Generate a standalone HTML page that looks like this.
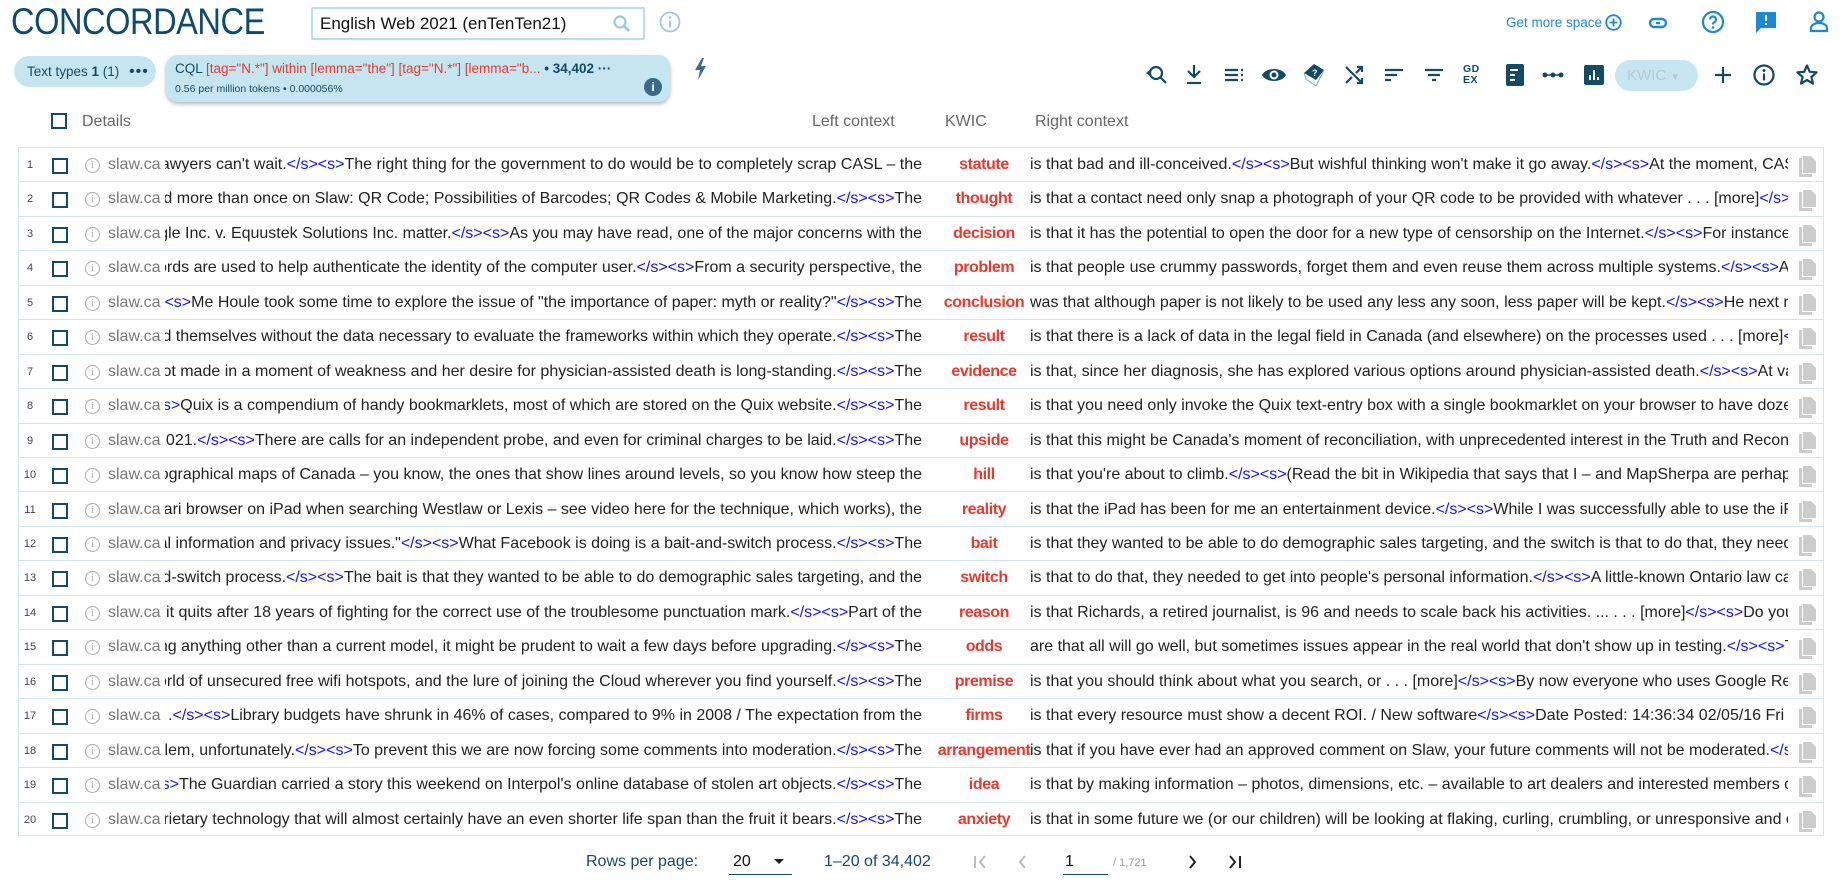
<!DOCTYPE html>
<html><head><meta charset="utf-8"><style>
*{box-sizing:border-box;margin:0;padding:0}
body{width:1843px;height:896px;background:#fff;font-family:"Liberation Sans",Arial,sans-serif;position:relative;overflow:hidden;color:#222}
.a{position:absolute}
.title{left:11px;top:2px;font-size:37px;color:#0e4a6e;letter-spacing:-0.5px;line-height:40px;transform:scaleX(0.88);transform-origin:left top;white-space:nowrap}
.search{left:311px;top:7px;width:334px;height:33px;border:2px solid #b7dcea;border-radius:2px;font-size:17px;line-height:29px;padding-left:7px;color:#111}
.ic{fill:none;stroke:#134a66;stroke-width:2.2}
.chip1{left:14px;top:56px;width:142px;height:31px;border-radius:16px;background:#c5e6f0;font-size:13.5px;line-height:31px;padding-left:13px;color:#134a66}
.chip2{left:166px;top:55px;width:504px;height:47px;border-radius:12px;background:#c5e6f0;box-shadow:0 2px 4px rgba(0,0,0,.3);color:#134a66}
.hdr{top:113px;font-size:16px;color:#666;line-height:18px}
.tbl{left:18px;top:147px;width:1806px;height:689px;border:1px solid #cfe6ee}
.row{position:absolute;left:0;width:1804px;height:34.45px;border-bottom:1px solid #cfe6ee;font-size:16px;line-height:34px;white-space:nowrap}
.row:last-child{border-bottom:none}
.n{position:absolute;left:0;width:22px;text-align:center;font-size:11px;color:#444}
.cb{position:absolute;left:33px;top:10px;width:16px;height:16px;border:2px solid #134a66}
.inf{position:absolute;left:66px;top:10px;width:15px;height:15px;border:1.3px solid #aaa;border-radius:50%;font-size:10px;line-height:13px;text-align:center;color:#aaa;font-family:"Liberation Serif",serif}
.dom{position:absolute;left:89px;color:#777}
.lc{position:absolute;left:146px;width:757px;overflow:hidden;display:flex;justify-content:flex-end}
.lc span,.rc span{flex:none}
.kw{position:absolute;left:915px;width:100px;text-align:center;color:#e8392f;font-weight:bold;font-size:16px;letter-spacing:-0.4px}
.rc{position:absolute;left:1011px;width:758px;overflow:hidden}
.t{color:#1515ee}
.cp{position:absolute;left:1780px;top:8px;width:17px;height:21px}
.ft{top:852px;font-size:16px;color:#134a66;line-height:20px}
</style></head><body>
<div class="a title">CONCORDANCE</div>
<div class="a search">English Web 2021 (enTenTen21)
<svg class="a" style="left:299px;top:5px" width="20" height="20" viewBox="0 0 20 20"><circle cx="8" cy="8" r="5.5" fill="none" stroke="#9cc9dc" stroke-width="2.2"/><path d="M12 12l5 5" stroke="#9cc9dc" stroke-width="2.8"/></svg></div>
<svg class="a" style="left:659px;top:11px" width="22" height="22" viewBox="0 0 22 22"><circle cx="11" cy="11" r="9.5" fill="none" stroke="#9cc9dc" stroke-width="1.8"/><circle cx="11" cy="6.5" r="1.3" fill="#9cc9dc"/><path d="M11 9.5v7" stroke="#9cc9dc" stroke-width="2"/></svg>

<div class="a" style="left:1506px;top:14px;font-size:13.5px;color:#1e88d2;line-height:18px">Get more space</div>
<svg class="a" style="left:1605px;top:14px" width="17" height="17" viewBox="0 0 17 17"><circle cx="8.5" cy="8.5" r="7.3" fill="none" stroke="#1e88d2" stroke-width="1.8"/><path d="M8.5 4.5v8M4.5 8.5h8" stroke="#1e88d2" stroke-width="1.8"/></svg>
<svg class="a" style="left:1647px;top:14px" width="22" height="18" viewBox="0 0 22 18"><rect x="3" y="5" width="16" height="8" rx="4" fill="none" stroke="#1e88d2" stroke-width="2.4"/><path d="M9 9h4" stroke="#1e88d2" stroke-width="2.4"/></svg>
<svg class="a" style="left:1701px;top:10px" width="24" height="24" viewBox="0 0 24 24"><circle cx="12" cy="12" r="10" fill="none" stroke="#1e88d2" stroke-width="2.2"/><path d="M9 9.5a3 3 0 1 1 4 2.8c-1 .5-1 1.2-1 2.2" fill="none" stroke="#1e88d2" stroke-width="2.2"/><circle cx="12" cy="17.5" r="1.3" fill="#1e88d2"/></svg>
<svg class="a" style="left:1755px;top:11px" width="22" height="24" viewBox="0 0 22 24"><path d="M1 1h20v16H6l-5 5z" fill="#1e88d2"/><path d="M11 4v6M11 12v2" stroke="#fff" stroke-width="2"/></svg>
<svg class="a" style="left:1809px;top:10px" width="20" height="24" viewBox="0 0 20 24"><circle cx="10" cy="7" r="4.5" fill="none" stroke="#1e88d2" stroke-width="2.2"/><path d="M2 21v-3c0-3 4-5 8-5s8 2 8 5v3z" fill="none" stroke="#1e88d2" stroke-width="2.2"/></svg>

<div class="a chip1">Text types <b>1</b> (1) <span style="font-size:16px;letter-spacing:1px;margin-left:6px">•••</span></div>
<div class="a chip2">
<div class="a" style="left:9px;top:6px;font-size:13.5px;white-space:nowrap">CQL <span style="color:#e8392f">[tag="N.*"] within [lemma="the"] [tag="N.*"] [lemma="b...</span> <b>• 34,402 ···</b></div>
<div class="a" style="left:9px;top:28px;font-size:10.5px">0.56 per million tokens • 0.000056%</div>
<div class="a" style="left:478px;top:23px;width:18px;height:18px;border-radius:50%;background:#3a6b86;color:#fff;font-size:12px;text-align:center;line-height:18px;font-weight:bold">i</div>
</div>
<svg class="a" style="left:694px;top:58px" width="14" height="22" viewBox="0 0 14 22"><path d="M8 0L1 12h5l-2 10 8-14H7l3-8z" fill="#3e6e88"/></svg>

<!-- toolbar -->
<svg class="a" style="left:1144px;top:63px" width="24" height="24" viewBox="0 0 24 24"><circle cx="12" cy="10" r="6" class="ic" stroke-width="2.6"/><path d="M16 14l6 6" class="ic" stroke-width="3"/><path d="M2 10l4-3v6z" fill="#134a66"/></svg>
<svg class="a" style="left:1183px;top:63px" width="22" height="24" viewBox="0 0 22 24"><path d="M11 2v11M5 8l6 6 6-6" class="ic" stroke-width="3"/><path d="M4 20h14" class="ic" stroke-width="2.5"/></svg>
<svg class="a" style="left:1223px;top:64px" width="22" height="22" viewBox="0 0 22 22"><path d="M2 6h13M2 11h13M2 16h13M18 6h2M18 11h2M18 16h2" class="ic" stroke-width="2.2"/></svg>
<svg class="a" style="left:1261px;top:64px" width="26" height="22" viewBox="0 0 26 22"><path d="M1 11C5 3 21 3 25 11C21 19 5 19 1 11z" fill="#134a66"/><circle cx="13" cy="11" r="4.5" fill="#fff"/><circle cx="13" cy="11" r="2.5" fill="#134a66"/></svg>
<svg class="a" style="left:1301px;top:62px" width="26" height="26" viewBox="0 0 26 26"><path d="M3 11l10-9 10 6-8 10z" fill="#134a66"/><path d="M3 11l2 6 10 7 8-16" fill="none" stroke="#8ab" stroke-width="1"/><text x="11" y="14" font-size="9" fill="#fff" font-family="Liberation Sans" font-weight="bold">?</text></svg>
<svg class="a" style="left:1343px;top:64px" width="22" height="22" viewBox="0 0 22 22"><path d="M3 3l16 16M3 19L9 13M13 9l6-6M14 19h5v-5M14 3h5v5" class="ic" stroke-width="2.6"/></svg>
<svg class="a" style="left:1383px;top:64px" width="22" height="22" viewBox="0 0 22 22"><path d="M2 6h18M2 11h12M2 16h6" class="ic" stroke-width="2.4"/></svg>
<svg class="a" style="left:1423px;top:64px" width="22" height="22" viewBox="0 0 22 22"><path d="M2 6h18M5 11h12M9 16h4" class="ic" stroke-width="2.4"/></svg>
<div class="a" style="left:1463px;top:64px;font-size:10.5px;font-weight:bold;color:#134a66;line-height:11px;letter-spacing:0.5px">GD<br>EX</div>
<svg class="a" style="left:1505px;top:63px" width="20" height="24" viewBox="0 0 20 24"><rect x="1" y="1" width="18" height="22" rx="2" fill="#134a66"/><path d="M5 7h8M5 12h5M5 17h5" stroke="#fff" stroke-width="2"/></svg>
<svg class="a" style="left:1542px;top:66px" width="22" height="18" viewBox="0 0 22 18"><circle cx="3" cy="9" r="2.5" fill="#134a66"/><circle cx="11" cy="9" r="2.5" fill="#134a66"/><circle cx="19" cy="9" r="2.5" fill="#134a66"/><path d="M3 9h16" stroke="#134a66" stroke-width="1.5"/></svg>
<svg class="a" style="left:1584px;top:64px" width="20" height="22" viewBox="0 0 20 22"><rect x="0" y="1" width="20" height="20" rx="2" fill="#134a66"/><path d="M6 16V11M10 16V6M14 16V13" stroke="#fff" stroke-width="2"/></svg>
<div class="a" style="left:1615px;top:60px;width:83px;height:31px;border-radius:16px;background:#c5e6f0;color:#b9c8cd;font-size:15px;line-height:31px;padding-left:12px">KWIC <span style="font-size:10px">▼</span></div>
<svg class="a" style="left:1712px;top:64px" width="22" height="22" viewBox="0 0 22 22"><path d="M11 3v16M3 11h16" class="ic" stroke-width="2.6"/></svg>
<svg class="a" style="left:1752px;top:63px" width="24" height="24" viewBox="0 0 24 24"><circle cx="12" cy="12" r="9.5" class="ic" stroke-width="2.4"/><circle cx="12" cy="7.5" r="1.5" fill="#134a66"/><path d="M12 10.5v7" class="ic" stroke-width="2.6"/></svg>
<svg class="a" style="left:1795px;top:63px" width="24" height="24" viewBox="0 0 24 24"><path d="M12 2.5l2.8 6.3 6.8.6-5.2 4.5 1.6 6.7L12 17l-6 3.6 1.6-6.7-5.2-4.5 6.8-.6z" class="ic" stroke-width="2.2" stroke-linejoin="round"/></svg>

<!-- header -->
<div class="a" style="left:51px;top:113px;width:16px;height:16px;border:2px solid #134a66"></div>
<div class="a hdr" style="left:82px">Details</div>
<div class="a hdr" style="left:812px">Left context</div>
<div class="a hdr" style="left:945px">KWIC</div>
<div class="a hdr" style="left:1035px">Right context</div>

<div class="a tbl" id="tb">
<div class="row" style="top:0"><span class="n">1</span><span class="cb"></span><span class="inf">i</span><span class="dom">slaw.ca</span><div class="lc"><span>to the policy concerns raised by many lawyers can't wait.<i class="t" style="font-style:normal">&lt;/s&gt;&lt;s&gt;</i>The right thing for the government to do would be to completely scrap CASL – the</span></div><span class="kw">statute</span><div class="rc"><span>is that bad and ill-conceived.<span class="t">&lt;/s&gt;&lt;s&gt;</span>But wishful thinking won't make it go away.<span class="t">&lt;/s&gt;&lt;s&gt;</span>At the moment, CASL is the law</span></div><svg class="cp" viewBox="0 0 17 21"><path d="M0 2h3v16h10v3H0z" fill="#ccc"/><path d="M4 0h8l5 5v12H4z" fill="#ccc"/></svg></div>
<div class="row" style="top:34.45px"><span class="n">2</span><span class="cb"></span><span class="inf">i</span><span class="dom">slaw.ca</span><div class="lc"><span>This has been discussed more than once on Slaw: QR Code; Possibilities of Barcodes; QR Codes &amp; Mobile Marketing.<span class="t">&lt;/s&gt;&lt;s&gt;</span>The</span></div><span class="kw">thought</span><div class="rc"><span>is that a contact need only snap a photograph of your QR code to be provided with whatever . . . [more]<span class="t">&lt;/s&gt;&lt;s&gt;</span>The</span></div><svg class="cp" viewBox="0 0 17 21"><path d="M0 2h3v16h10v3H0z" fill="#ccc"/><path d="M4 0h8l5 5v12H4z" fill="#ccc"/></svg></div>
<div class="row" style="top:68.9px"><span class="n">3</span><span class="cb"></span><span class="inf">i</span><span class="dom">slaw.ca</span><div class="lc"><span>in the Google Inc. v. Equustek Solutions Inc. matter.<span class="t">&lt;/s&gt;&lt;s&gt;</span>As you may have read, one of the major concerns with the</span></div><span class="kw">decision</span><div class="rc"><span>is that it has the potential to open the door for a new type of censorship on the Internet.<span class="t">&lt;/s&gt;&lt;s&gt;</span>For instance, a</span></div><svg class="cp" viewBox="0 0 17 21"><path d="M0 2h3v16h10v3H0z" fill="#ccc"/><path d="M4 0h8l5 5v12H4z" fill="#ccc"/></svg></div>
<div class="row" style="top:103.35px"><span class="n">4</span><span class="cb"></span><span class="inf">i</span><span class="dom">slaw.ca</span><div class="lc"><span>Passwords are used to help authenticate the identity of the computer user.<span class="t">&lt;/s&gt;&lt;s&gt;</span>From a security perspective, the</span></div><span class="kw">problem</span><div class="rc"><span>is that people use crummy passwords, forget them and even reuse them across multiple systems.<span class="t">&lt;/s&gt;&lt;s&gt;</span>And</span></div><svg class="cp" viewBox="0 0 17 21"><path d="M0 2h3v16h10v3H0z" fill="#ccc"/><path d="M4 0h8l5 5v12H4z" fill="#ccc"/></svg></div>
<div class="row" style="top:137.8px"><span class="n">5</span><span class="cb"></span><span class="inf">i</span><span class="dom">slaw.ca</span><div class="lc"><span><span class="t">&lt;/s&gt;&lt;s&gt;</span>Me Houle took some time to explore the issue of "the importance of paper: myth or reality?"<span class="t">&lt;/s&gt;&lt;s&gt;</span>The</span></div><span class="kw">conclusion</span><div class="rc"><span>was that although paper is not likely to be used any less any soon, less paper will be kept.<span class="t">&lt;/s&gt;&lt;s&gt;</span>He next mentioned</span></div><svg class="cp" viewBox="0 0 17 21"><path d="M0 2h3v16h10v3H0z" fill="#ccc"/><path d="M4 0h8l5 5v12H4z" fill="#ccc"/></svg></div>
<div class="row" style="top:172.25px"><span class="n">6</span><span class="cb"></span><span class="inf">i</span><span class="dom">slaw.ca</span><div class="lc"><span>find themselves without the data necessary to evaluate the frameworks within which they operate.<span class="t">&lt;/s&gt;&lt;s&gt;</span>The</span></div><span class="kw">result</span><div class="rc"><span>is that there is a lack of data in the legal field in Canada (and elsewhere) on the processes used . . . [more]<span class="t">&lt;/s&gt;</span></span></div><svg class="cp" viewBox="0 0 17 21"><path d="M0 2h3v16h10v3H0z" fill="#ccc"/><path d="M4 0h8l5 5v12H4z" fill="#ccc"/></svg></div>
<div class="row" style="top:206.7px"><span class="n">7</span><span class="cb"></span><span class="inf">i</span><span class="dom">slaw.ca</span><div class="lc"><span>was not made in a moment of weakness and her desire for physician-assisted death is long-standing.<span class="t">&lt;/s&gt;&lt;s&gt;</span>The</span></div><span class="kw">evidence</span><div class="rc"><span>is that, since her diagnosis, she has explored various options around physician-assisted death.<span class="t">&lt;/s&gt;&lt;s&gt;</span>At various</span></div><svg class="cp" viewBox="0 0 17 21"><path d="M0 2h3v16h10v3H0z" fill="#ccc"/><path d="M4 0h8l5 5v12H4z" fill="#ccc"/></svg></div>
<div class="row" style="top:241.15px"><span class="n">8</span><span class="cb"></span><span class="inf">i</span><span class="dom">slaw.ca</span><div class="lc"><span><span class="t">&lt;/s&gt;&lt;s&gt;</span>Quix is a compendium of handy bookmarklets, most of which are stored on the Quix website.<span class="t">&lt;/s&gt;&lt;s&gt;</span>The</span></div><span class="kw">result</span><div class="rc"><span>is that you need only invoke the Quix text-entry box with a single bookmarklet on your browser to have dozens</span></div><svg class="cp" viewBox="0 0 17 21"><path d="M0 2h3v16h10v3H0z" fill="#ccc"/><path d="M4 0h8l5 5v12H4z" fill="#ccc"/></svg></div>
<div class="row" style="top:275.6px"><span class="n">9</span><span class="cb"></span><span class="inf">i</span><span class="dom">slaw.ca</span><div class="lc"><span>June 2021.<span class="t">&lt;/s&gt;&lt;s&gt;</span>There are calls for an independent probe, and even for criminal charges to be laid.<span class="t">&lt;/s&gt;&lt;s&gt;</span>The</span></div><span class="kw">upside</span><div class="rc"><span>is that this might be Canada's moment of reconciliation, with unprecedented interest in the Truth and Reconciliation</span></div><svg class="cp" viewBox="0 0 17 21"><path d="M0 2h3v16h10v3H0z" fill="#ccc"/><path d="M4 0h8l5 5v12H4z" fill="#ccc"/></svg></div>
<div class="row" style="top:310.05px"><span class="n">10</span><span class="cb"></span><span class="inf">i</span><span class="dom">slaw.ca</span><div class="lc"><span>topographical maps of Canada – you know, the ones that show lines around levels, so you know how steep the</span></div><span class="kw">hill</span><div class="rc"><span>is that you're about to climb.<span class="t">&lt;/s&gt;&lt;s&gt;</span>(Read the bit in Wikipedia that says that I – and MapSherpa are perhaps</span></div><svg class="cp" viewBox="0 0 17 21"><path d="M0 2h3v16h10v3H0z" fill="#ccc"/><path d="M4 0h8l5 5v12H4z" fill="#ccc"/></svg></div>
<div class="row" style="top:344.5px"><span class="n">11</span><span class="cb"></span><span class="inf">i</span><span class="dom">slaw.ca</span><div class="lc"><span>using the Safari browser on iPad when searching Westlaw or Lexis – see video here for the technique, which works), the</span></div><span class="kw">reality</span><div class="rc"><span>is that the iPad has been for me an entertainment device.<span class="t">&lt;/s&gt;&lt;s&gt;</span>While I was successfully able to use the iPad</span></div><svg class="cp" viewBox="0 0 17 21"><path d="M0 2h3v16h10v3H0z" fill="#ccc"/><path d="M4 0h8l5 5v12H4z" fill="#ccc"/></svg></div>
<div class="row" style="top:378.95px"><span class="n">12</span><span class="cb"></span><span class="inf">i</span><span class="dom">slaw.ca</span><div class="lc"><span>personal information and privacy issues."<span class="t">&lt;/s&gt;&lt;s&gt;</span>What Facebook is doing is a bait-and-switch process.<span class="t">&lt;/s&gt;&lt;s&gt;</span>The</span></div><span class="kw">bait</span><div class="rc"><span>is that they wanted to be able to do demographic sales targeting, and the switch is that to do that, they needed</span></div><svg class="cp" viewBox="0 0 17 21"><path d="M0 2h3v16h10v3H0z" fill="#ccc"/><path d="M4 0h8l5 5v12H4z" fill="#ccc"/></svg></div>
<div class="row" style="top:413.4px"><span class="n">13</span><span class="cb"></span><span class="inf">i</span><span class="dom">slaw.ca</span><div class="lc"><span>is a bait-and-switch process.<span class="t">&lt;/s&gt;&lt;s&gt;</span>The bait is that they wanted to be able to do demographic sales targeting, and the</span></div><span class="kw">switch</span><div class="rc"><span>is that to do that, they needed to get into people's personal information.<span class="t">&lt;/s&gt;&lt;s&gt;</span>A little-known Ontario law case</span></div><svg class="cp" viewBox="0 0 17 21"><path d="M0 2h3v16h10v3H0z" fill="#ccc"/><path d="M4 0h8l5 5v12H4z" fill="#ccc"/></svg></div>
<div class="row" style="top:447.85px"><span class="n">14</span><span class="cb"></span><span class="inf">i</span><span class="dom">slaw.ca</span><div class="lc"><span>he is calling it quits after 18 years of fighting for the correct use of the troublesome punctuation mark.<span class="t">&lt;/s&gt;&lt;s&gt;</span>Part of the</span></div><span class="kw">reason</span><div class="rc"><span>is that Richards, a retired journalist, is 96 and needs to scale back his activities. ... . . . [more]<span class="t">&lt;/s&gt;&lt;s&gt;</span>Do you</span></div><svg class="cp" viewBox="0 0 17 21"><path d="M0 2h3v16h10v3H0z" fill="#ccc"/><path d="M4 0h8l5 5v12H4z" fill="#ccc"/></svg></div>
<div class="row" style="top:482.3px"><span class="n">15</span><span class="cb"></span><span class="inf">i</span><span class="dom">slaw.ca</span><div class="lc"><span>if you're using anything other than a current model, it might be prudent to wait a few days before upgrading.<span class="t">&lt;/s&gt;&lt;s&gt;</span>The</span></div><span class="kw">odds</span><div class="rc"><span>are that all will go well, but sometimes issues appear in the real world that don't show up in testing.<span class="t">&lt;/s&gt;&lt;s&gt;</span>The</span></div><svg class="cp" viewBox="0 0 17 21"><path d="M0 2h3v16h10v3H0z" fill="#ccc"/><path d="M4 0h8l5 5v12H4z" fill="#ccc"/></svg></div>
<div class="row" style="top:516.75px"><span class="n">16</span><span class="cb"></span><span class="inf">i</span><span class="dom">slaw.ca</span><div class="lc"><span>the world of unsecured free wifi hotspots, and the lure of joining the Cloud wherever you find yourself.<span class="t">&lt;/s&gt;&lt;s&gt;</span>The</span></div><span class="kw">premise</span><div class="rc"><span>is that you should think about what you search, or . . . [more]<span class="t">&lt;/s&gt;&lt;s&gt;</span>By now everyone who uses Google Reader</span></div><svg class="cp" viewBox="0 0 17 21"><path d="M0 2h3v16h10v3H0z" fill="#ccc"/><path d="M4 0h8l5 5v12H4z" fill="#ccc"/></svg></div>
<div class="row" style="top:551.2px"><span class="n">17</span><span class="cb"></span><span class="inf">i</span><span class="dom">slaw.ca</span><div class="lc"><span>budgets .<span class="t">&lt;/s&gt;&lt;s&gt;</span>Library budgets have shrunk in 46% of cases, compared to 9% in 2008 / The expectation from the</span></div><span class="kw">firms</span><div class="rc"><span>is that every resource must show a decent ROI. / New software<span class="t">&lt;/s&gt;&lt;s&gt;</span>Date Posted: 14:36:34 02/05/16 Fri</span></div><svg class="cp" viewBox="0 0 17 21"><path d="M0 2h3v16h10v3H0z" fill="#ccc"/><path d="M4 0h8l5 5v12H4z" fill="#ccc"/></svg></div>
<div class="row" style="top:585.65px"><span class="n">18</span><span class="cb"></span><span class="inf">i</span><span class="dom">slaw.ca</span><div class="lc"><span>a real problem, unfortunately.<span class="t">&lt;/s&gt;&lt;s&gt;</span>To prevent this we are now forcing some comments into moderation.<span class="t">&lt;/s&gt;&lt;s&gt;</span>The</span></div><span class="kw">arrangement</span><div class="rc"><span>is that if you have ever had an approved comment on Slaw, your future comments will not be moderated.<span class="t">&lt;/s&gt;</span></span></div><svg class="cp" viewBox="0 0 17 21"><path d="M0 2h3v16h10v3H0z" fill="#ccc"/><path d="M4 0h8l5 5v12H4z" fill="#ccc"/></svg></div>
<div class="row" style="top:620.1px"><span class="n">19</span><span class="cb"></span><span class="inf">i</span><span class="dom">slaw.ca</span><div class="lc"><span><span class="t">&lt;/s&gt;&lt;s&gt;</span>The Guardian carried a story this weekend on Interpol's online database of stolen art objects.<span class="t">&lt;/s&gt;&lt;s&gt;</span>The</span></div><span class="kw">idea</span><div class="rc"><span>is that by making information – photos, dimensions, etc. – available to art dealers and interested members of</span></div><svg class="cp" viewBox="0 0 17 21"><path d="M0 2h3v16h10v3H0z" fill="#ccc"/><path d="M4 0h8l5 5v12H4z" fill="#ccc"/></svg></div>
<div class="row" style="top:654.55px"><span class="n">20</span><span class="cb"></span><span class="inf">i</span><span class="dom">slaw.ca</span><div class="lc"><span>proprietary technology that will almost certainly have an even shorter life span than the fruit it bears.<span class="t">&lt;/s&gt;&lt;s&gt;</span>The</span></div><span class="kw">anxiety</span><div class="rc"><span>is that in some future we (or our children) will be looking at flaking, curling, crumbling, or unresponsive and obsolete</span></div><svg class="cp" viewBox="0 0 17 21"><path d="M0 2h3v16h10v3H0z" fill="#ccc"/><path d="M4 0h8l5 5v12H4z" fill="#ccc"/></svg></div>
</div>

<!-- footer -->
<div class="a ft" style="left:586px">Rows per page:</div>
<div class="a ft" style="left:733px;color:#111">20</div>
<div class="a" style="left:774px;top:859px;width:0;height:0;border-left:5px solid transparent;border-right:5px solid transparent;border-top:5px solid #222"></div>
<div class="a" style="left:729px;top:874px;width:63px;border-top:1.5px solid #134a66"></div>
<div class="a ft" style="left:824px">1–20 of 34,402</div>
<svg class="a" style="left:972px;top:854px" width="18" height="16" viewBox="0 0 18 16"><path d="M3 2v12M13 2L8 8l5 6" fill="none" stroke="#bbb" stroke-width="2"/></svg>
<svg class="a" style="left:1016px;top:854px" width="14" height="16" viewBox="0 0 14 16"><path d="M9 2L4 8l5 6" fill="none" stroke="#bbb" stroke-width="2"/></svg>
<div class="a ft" style="left:1065px;color:#111">1</div>
<div class="a" style="left:1063px;top:874px;width:45px;border-top:1.5px solid #134a66"></div>
<div class="a" style="left:1113px;top:857px;font-size:11px;color:#999">/ 1,721</div>
<svg class="a" style="left:1185px;top:854px" width="14" height="16" viewBox="0 0 14 16"><path d="M5 2l5 6-5 6" fill="none" stroke="#222" stroke-width="2"/></svg>
<svg class="a" style="left:1226px;top:854px" width="18" height="16" viewBox="0 0 18 16"><path d="M4 2l5 6-5 6M14 2v12" fill="none" stroke="#222" stroke-width="2"/></svg>
</body></html>
